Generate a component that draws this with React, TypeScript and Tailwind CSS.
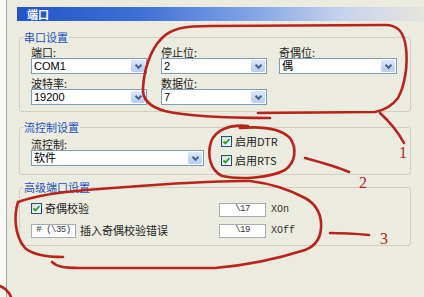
import React from "react";

const cjk = "font-['Noto_Sans_CJK_SC',sans-serif]";

function Chevron() {
  return (
    <svg width="9" height="7" viewBox="0 0 9 7">
      <path d="M1.5 1.8 L4.5 4.8 L7.5 1.8" fill="none" stroke="#4d6185" strokeWidth="2" />
    </svg>
  );
}

// XP style combobox
function Combo({ value, className = "" }: { value: string; className?: string }) {
  return (
    <div className={`flex h-[16px] border border-[#7f9db9] bg-white ${className}`}>
      <span className="flex-1 pl-[2px] text-[11px] leading-[14px] text-black font-['Liberation_Sans','Noto_Sans_CJK_SC',sans-serif]">
        {value}
      </span>
      <span className="m-[1px] flex w-[14px] items-center justify-center rounded-[2px] bg-[linear-gradient(to_bottom,#dce7fc,#b7cbf4)]">
        <Chevron />
      </span>
    </div>
  );
}

function Label({ text }: { text: string }) {
  return <div className={`h-[12px] text-[11px] leading-[12px] text-[#222] ${cjk}`}>{text}</div>;
}

function Check({ label }: { label: string }) {
  return (
    <div className="flex h-[13px] items-center">
      <span className="flex h-[11px] w-[11px] items-center justify-center border border-[#1c5180] bg-[linear-gradient(135deg,#dcdcd6,#ffffff)]">
        <svg width="9" height="9" viewBox="0 0 9 9">
          <path d="M1.5 4.5 L3.5 6.5 L7.5 2" fill="none" stroke="#21a121" strokeWidth="1.8" />
        </svg>
      </span>
      <span className={`ml-[3px] text-[11px] leading-[13px] text-[#222] ${cjk}`}>{label}</span>
    </div>
  );
}

function SmallBox({ value, className = "" }: { value: string; className?: string }) {
  return (
    <div
      className={`flex h-[14px] items-center justify-center whitespace-nowrap border border-[#a5acb5] bg-white text-[9px] tracking-[-0.5px] text-[#333] font-['Liberation_Mono',monospace] ${className}`}
    >
      {value}
    </div>
  );
}

function Group({ title, children, className = "" }: { title: string; children: React.ReactNode; className?: string }) {
  return (
    <fieldset className={`rounded-[3px] border border-[#d0d0bf] px-[11px] ${className}`}>
      <legend className={`-ml-[8px] px-[1px] text-[11px] leading-[12px] text-[#2150c0] ${cjk}`}>{title}</legend>
      {children}
    </fieldset>
  );
}

export default function App() {
  return (
    <div className="relative flex h-[297px] w-[424px] overflow-hidden bg-[#ecebdf]">
      {/* left strip */}
      <div className="w-[7px] border-r border-[#a8a8a0] bg-[#f8f8f5]" />

      <div className="flex-1 pl-[10px]">
        {/* title bar */}
        <div className="mt-[7px] flex h-[14px] items-center bg-[linear-gradient(to_right,#2254c8,#3e6fd6_30%,#88a9e6_60%,#c6d3ec_80%,#e6e5de)] pl-[10px]">
          <span className={`text-[11px] font-bold leading-[14px] text-white ${cjk}`}>端口</span>
        </div>

        <div className="pl-[2px] pr-[13px]">
          {/* 串口设置 */}
          <Group title="串口设置" className="mt-[10px] pb-[6px]">
            <div className="flex pt-[3px]">
              <div className="w-[116px]">
                <Label text="端口:" />
                <Combo value="COM1" />
                <div className="mt-[3px]" />
                <Label text="波特率:" />
                <Combo value="19200" />
              </div>
              <div className="ml-[14px] w-[106px]">
                <Label text="停止位:" />
                <Combo value="2" />
                <div className="mt-[3px]" />
                <Label text="数据位:" />
                <Combo value="7" />
              </div>
              <div className="ml-[12px] w-[118px]">
                <Label text="奇偶位:" />
                <Combo value="偶" />
              </div>
            </div>
          </Group>

          {/* 流控制设置 */}
          <Group title="流控制设置" className="mt-[9px] pb-[7px]">
            <div className="flex">
              <div className="w-[173px] pt-[5px]">
                <Label text="流控制:" />
                <Combo value="软件" />
              </div>
              <div className="ml-[17px] flex flex-col gap-[6px] pt-[2px]">
                <Check label="启用DTR" />
                <Check label="启用RTS" />
              </div>
            </div>
          </Group>

          {/* 高级端口设置 */}
          <Group title="高级端口设置" className="mt-[6px] pb-[7px]">
            <div className="grid grid-cols-[188px_auto] gap-y-[6px] pt-[9px]">
              <Check label="奇偶校验" />
              <div className="flex items-center">
                <SmallBox value="\17" className="w-[47px]" />
                <span className="ml-[5px] text-[10px] text-[#333] font-['Liberation_Mono',monospace]">XOn</span>
              </div>
              <div className="flex items-center">
                <SmallBox value="# (\35)" className="w-[45px]" />
                <span className={`ml-[4px] text-[11px] leading-[13px] text-[#222] ${cjk}`}>插入奇偶校验错误</span>
              </div>
              <div className="flex items-center">
                <SmallBox value="\19" className="w-[47px]" />
                <span className="ml-[5px] text-[10px] text-[#333] font-['Liberation_Mono',monospace]">XOff</span>
              </div>
            </div>
          </Group>
        </div>
      </div>

      {/* red hand-drawn annotations */}
      <svg className="pointer-events-none absolute left-0 top-0" width="424" height="297" viewBox="0 0 424 297">
        <g fill="none" stroke="#b8231c" strokeWidth="2.6" strokeLinecap="round" strokeLinejoin="round">
          <path d="M 270 118 C 230 118 190 117 165 111 C 150 107 142 100 143 88 C 144 70 150 50 162 38 C 172 28 185 26 210 26 L 385 25 C 398 25 404 32 406 48 C 408 65 405 85 398 98 C 392 106 385 110 375 112 L 258 113" />
          <path d="M 380 113 C 390 122 398 132 404 143" />
          <path d="M 248 126 C 230 124 215 130 211 142 C 207 155 210 170 222 176 C 240 180 270 178 285 170 C 296 162 297 148 290 138 C 280 128 262 126 240 128" />
          <path d="M 305 158 C 320 162 335 166 349 172" />
          <path d="M 18 202 C 14 215 14 235 25 248 C 33 255 45 257 63 257 M 52 262 C 56 266 62 268 80 268 L 215 268 C 250 265 280 258 305 250 C 318 245 322 235 321 222 C 320 212 316 204 305 198 C 290 190 275 184 250 181 C 200 180 130 187 87 190 C 60 192 35 196 18 202" />
          <path d="M 330 233 C 345 233 358 234 369 235" />
          <path d="M 0 286 C 5 288 9 292 11 297" />
        </g>
      </svg>
      <span className="pointer-events-none absolute left-[399px] top-[145px] text-[16px] leading-[16px] text-[#b8231c] font-['Liberation_Serif',serif]">1</span>
      <span className="pointer-events-none absolute left-[359px] top-[175px] text-[16px] leading-[16px] text-[#b8231c] font-['Liberation_Serif',serif]">2</span>
      <span className="pointer-events-none absolute left-[380px] top-[231px] text-[16px] leading-[16px] text-[#b8231c] font-['Liberation_Serif',serif]">3</span>
    </div>
  );
}
